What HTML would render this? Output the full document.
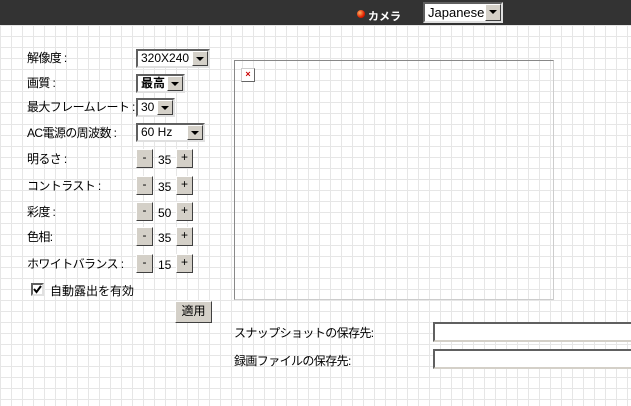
<!DOCTYPE html>
<html><head><meta charset="utf-8"><style>
*{margin:0;padding:0;box-sizing:border-box}
body{width:631px;height:406px;overflow:hidden;position:relative;font-family:"Liberation Sans","Noto Sans CJK JP",sans-serif;font-size:12px;color:#000;
background-color:#fff;background-image:linear-gradient(#e6e6e6 1px,transparent 1px),linear-gradient(90deg,#e6e6e6 1px,transparent 1px);background-size:11px 11px;background-position:0 3px}
.a{position:absolute;white-space:nowrap}
.l{letter-spacing:-0.6px}
.hdr{left:0;top:0;width:631px;height:25px;background:#333}
.sel{position:absolute;background:#fff;border:2px solid;border-color:#606060 #e0e0e0 #e0e0e0 #606060;height:19px;font-size:12px;line-height:15px;padding-left:3px}
.sel i{position:absolute;right:0;top:0;width:16px;height:15px;background:#d4d0c8;border:1px solid;border-color:#fff #404040 #404040 #fff}
.sel i:after{content:"";position:absolute;left:3px;top:5px;border:4px solid transparent;border-top:4px solid #000;border-bottom:0}
.btn{position:absolute;width:17px;height:19px;background:#d4d0c8;border:1px solid;border-color:#fff #404040 #404040 #fff;text-align:center;line-height:15px;font-size:12px}
.inp{position:absolute;background:#fff;border:2px solid;border-color:#606060 #d4d0c8 #d4d0c8 #606060;height:20px}
</style></head><body>
<div class="a hdr"></div>
<div class="a" style="left:357px;top:10px;width:8px;height:8px;border-radius:50%;background:radial-gradient(circle at 35% 35%,#ffb060,#e02000 60%,#900)"></div>
<div class="a" style="left:368px;top:8px;color:#fff;font-size:11px;font-weight:bold">カメラ</div>
<div class="sel" style="left:423px;top:2px;width:80px;height:21px;font-size:13px;line-height:17px">Japanese<i style="height:17px"></i></div>

<div class="a l" style="left:27px;top:49px">解像度 :</div>
<div class="a l" style="left:27px;top:74px">画質 :</div>
<div class="a l" style="left:27px;top:98px">最大フレームレート :</div>
<div class="a l" style="left:27px;top:124px">AC電源の周波数 :</div>
<div class="a l" style="left:27px;top:150px">明るさ :</div>
<div class="a l" style="left:27px;top:177px">コントラスト :</div>
<div class="a l" style="left:27px;top:203px">彩度 :</div>
<div class="a l" style="left:27px;top:228px">色相:</div>
<div class="a l" style="left:27px;top:255px">ホワイトバランス :</div>

<div class="sel" style="left:136px;top:49px;width:74px">320X240<i></i></div>
<div class="sel" style="left:136px;top:74px;width:49px;font-weight:bold">最高<i></i></div>
<div class="sel" style="left:136px;top:98px;width:39px">30<i></i></div>
<div class="sel" style="left:136px;top:123px;width:69px">60 Hz<i></i></div>

<div class="btn" style="left:136px;top:149px">-</div><div class="a" style="left:158px;top:153px">35</div><div class="btn" style="left:176px;top:149px">+</div>
<div class="btn" style="left:136px;top:176px">-</div><div class="a" style="left:158px;top:180px">35</div><div class="btn" style="left:176px;top:176px">+</div>
<div class="btn" style="left:136px;top:202px">-</div><div class="a" style="left:158px;top:206px">50</div><div class="btn" style="left:176px;top:202px">+</div>
<div class="btn" style="left:136px;top:227px">-</div><div class="a" style="left:158px;top:231px">35</div><div class="btn" style="left:176px;top:227px">+</div>
<div class="btn" style="left:136px;top:254px">-</div><div class="a" style="left:158px;top:258px">15</div><div class="btn" style="left:176px;top:254px">+</div>

<div class="a" style="left:31px;top:283px;width:13px;height:13px;background:#fff;border:2px solid;border-color:#606060 #e0e0e0 #e0e0e0 #606060"><svg width="9" height="9" style="position:absolute;left:0;top:0"><path d="M1 4 L3.5 7 L8 1" stroke="#000" stroke-width="2" fill="none"/></svg></div>
<div class="a" style="left:50px;top:282px">自動露出を有効</div>
<div class="btn" style="left:175px;top:301px;width:37px;height:22px;font-size:12px;line-height:18px">適用</div>

<div class="a" style="left:234px;top:60px;width:320px;height:240px;border:1px solid;border-color:#888 #ccc #ccc #888"></div>
<div class="a" style="left:241px;top:68px;width:14px;height:14px;border:1px solid;border-color:#ccc #666 #666 #ccc;background:#fff;color:#c00;font-size:9px;line-height:11px;text-align:center;font-weight:bold">×</div>

<div class="a l" style="left:234px;top:324px">スナップショットの保存先:</div>
<div class="a l" style="left:234px;top:352px">録画ファイルの保存先:</div>
<div class="inp" style="left:433px;top:322px;width:200px"></div>
<div class="inp" style="left:433px;top:349px;width:200px"></div>
</body></html>
